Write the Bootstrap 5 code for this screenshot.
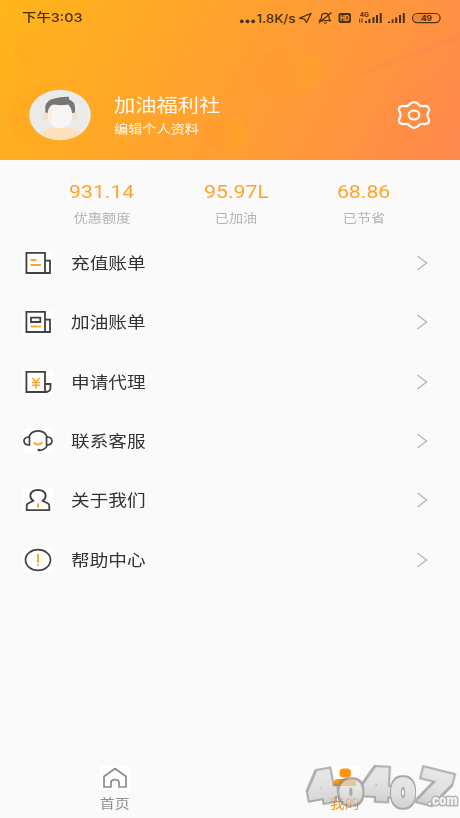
<!DOCTYPE html>
<html lang="zh-CN">
<head>
<meta charset="utf-8">
<meta name="viewport" content="width=device-width, initial-scale=1">
<title>我的</title>
<link href="https://cdn.jsdelivr.net/npm/bootstrap@5.3.0/dist/css/bootstrap.min.css" rel="stylesheet">
<style>
  body { background: #fafafa; font-family: Roboto, "Noto Sans CJK SC", sans-serif; color: #333; }
  .screen { width: 460px; height: 818px; }
  .hero { height: 160px; background: linear-gradient(116deg, #ffb51a 0%, #ffa728 32%, #ff9a38 65%, #ff8a4e 100%); }
  .hero-art { inset: 0; }
  .statusbar { height: 35px; padding: 0 19px 0 22px; color: #4b300c; }
  .clock { font: 500 12.2px/18px Inter, "Noto Sans CJK SC", sans-serif; }
  .wide { display: inline-block; white-space: nowrap; transform: scaleX(1.18); transform-origin: left center; }
  .wide-mid { transform-origin: center; }
  .profile { height: 62px; margin-top: 49px; padding: 0 28px 0 29px; }
  .names { margin-left: 23px; padding-top: 10px; color: #fffaf0; }
  .user-name { font-size: 18px; line-height: 24px; }
  .user-edit { font-size: 12px; line-height: 18px; margin-top: 3px; }
  .stats { height: 73px; padding: 19px 35px 0; display: grid; grid-template-columns: 134px 134px 122px; }
  .stat-num { font-size: 18px; line-height: 26px; color: #ffa42c; }
  .stat-label { font-size: 12px; line-height: 18px; color: #b3b3b3; margin-top: 5px; }
  .menu-row { height: 59.45px; padding: 0 32px 0 23px; }
  .menu-label { font-size: 15.8px; line-height: 24px; margin: 2px 0 0 17.5px; }
  .tile { background: #fff; }
  .tabs { height: 56px; }
  .tab-label { font-size: 12.7px; line-height: 18px; margin-top: 5px; color: #909090; }
  .tab-on { color: #ff9512; }
  .stamp { right: 0; bottom: 0; }
</style>
<script src="https://cdn.jsdelivr.net/npm/bootstrap@5.3.0/dist/js/bootstrap.bundle.min.js"></script>
</head>
<body>
<main class="screen position-relative overflow-hidden d-flex flex-column">
  <header class="hero position-relative flex-shrink-0">
    <svg class="hero-art position-absolute" width="460" height="160">
      <defs>
        <linearGradient id="blob"><stop offset="0" stop-color="#ff962f" stop-opacity=".3"/><stop offset="1" stop-color="#ffa526" stop-opacity=".5"/></linearGradient>
        <linearGradient id="blobS"><stop offset="0" stop-color="#ff9430" stop-opacity=".5"/><stop offset="1" stop-color="#ffa820" stop-opacity=".7"/></linearGradient>
        <linearGradient id="blobL"><stop offset="0" stop-color="#ff9d20" stop-opacity=".25"/><stop offset="1" stop-color="#ffa52a" stop-opacity="0"/></linearGradient>
      </defs>
      <ellipse cx="288" cy="72" rx="34" ry="25" fill="url(#blob)"/>
      <ellipse cx="226" cy="134" rx="22" ry="17" fill="url(#blobS)"/>
      <ellipse cx="40" cy="50" rx="26" ry="19" fill="url(#blobL)"/>
      <ellipse cx="61" cy="116" rx="52" ry="35" fill="url(#blobL)"/>
      <path d="M460 32L400 57L330 84L385 67L460 40z" fill="#ff8052" opacity=".3"/>
      <path d="M460 64C415 85 385 90 355 160H460z" fill="#ff8052" opacity=".1"/>
    </svg>
    <div class="statusbar position-relative d-flex align-items-center justify-content-between">
      <span class="clock wide">下午3:03</span>
      <svg width="202" height="20" viewBox="239 7 202 20" fill="#4b300c" font-family="Inter, sans-serif">
        <circle cx="241.8" cy="20.3" r="1.9"/><circle cx="247.5" cy="20.3" r="1.9"/><circle cx="253.2" cy="20.3" r="1.9"/>
        <text x="256.500" y="21.500" font-size="12" font-weight="500" textLength="39" lengthAdjust="spacingAndGlyphs">1.8K/s</text>
        <path d="M299.500 17.200L311 12.500L306.500 21.500L304.500 18.200z" fill="none" stroke="#4b300c" stroke-width="1.300" stroke-linejoin="round"/>
        <path d="M319.500 19.700H330.500L329 17.500V15.500C329 13.300 327.500 12.300 325.300 12.300S321.500 13.300 321.500 15.500V17.500zM323.800 22H327M318.800 22L331.500 11.500" fill="none" stroke="#4b300c" stroke-width="1.200"/>
        <rect x="338.500" y="12" width="12.500" height="10" rx="2"/>
        <text x="340" y="19.800" font-size="7" font-weight="800" fill="#ffa03a" textLength="9.500" lengthAdjust="spacingAndGlyphs">HD</text>
        <text x="359.800" y="15.600" font-size="6" font-weight="700" textLength="9" lengthAdjust="spacingAndGlyphs">4G</text>
        <path d="M359.700 17.500V21.500M362 17.500V21.500" stroke="#4b300c" stroke-width="1"/>
        <path d="M365 20h2v2h-2zM368.400 18h2v4h-2zM372.500 16h2v6h-2zM376 14h2v8h-2zM379.700 12h2v10h-2zM388 20.500h2v1.500h-2zM391.600 18.500h2v3.500h-2zM395.200 16.500h2v5.500h-2zM399 14h2v8h-2zM402.800 12h2v10h-2z"/>
        <rect x="412.600" y="12.500" width="27.500" height="9.200" rx="4.600" fill="none" stroke="#4b300c" stroke-width="1.200"/>
        <path d="M418 13.500H427V20.700H418A3.600 3.600 0 0 1 418 13.500z" opacity=".13"/>
        <text x="421" y="20" font-size="8" font-weight="700" textLength="11" lengthAdjust="spacingAndGlyphs">49</text>
      </svg>
    </div>
    <div class="profile position-relative d-flex align-items-start">
      <svg width="62" height="62" viewBox="0 0 62 62" class="flex-shrink-0">
        <defs><clipPath id="av"><ellipse cx="31" cy="31" rx="30" ry="24.500"/></clipPath></defs>
        <ellipse cx="31" cy="31" rx="30.800" ry="25.300" fill="#ebebe9"/>
        <g clip-path="url(#av)">
          <ellipse cx="31" cy="55" rx="23" ry="12" fill="#ffe0bd"/>
          <ellipse cx="17" cy="32" rx="3.500" ry="4" fill="#f6e1ce"/><ellipse cx="45" cy="32" rx="3.500" ry="4" fill="#f6e1ce"/>
          <path d="M19 28Q20 20 31 20T43 28V34Q41 44 31 44T19 34z" fill="#f8f6f5"/>
          <path d="M19 28Q20 22 23 21V39Q19 36 19 29z" fill="#ffeedb"/>
          <path d="M16.300 28.500V22Q18 17 22 15.500Q28 13 40 12.700V15.500Q46 17.500 46 23V28.500L43 29Q42.500 23 39 20.500Q32 22 25 20.500Q20 20.500 18.500 29z" fill="#777575"/>
        </g>
      </svg>
      <div class="names d-flex flex-column align-items-start">
        <span class="user-name wide">加油福利社</span>
        <span class="user-edit wide">编辑个人资料</span>
      </div>
      <svg class="ms-auto align-self-center" width="36" height="32" viewBox="0 0 36 32" fill="none" stroke="#fff" stroke-width="2.200" stroke-linejoin="round">
        <path d="M14.500 4.500Q18 1.700 21.500 4.500Q24 7.800 28 7Q32 6.600 33 9.500Q33.500 11.500 32 13.500Q30.800 16 32 18.500Q33.500 20.500 33 22.500Q32 25.400 28 25Q24 24.200 21.500 27.500Q18 30.300 14.500 27.500Q12 24.200 8 25Q4 25.400 3 22.500Q2.500 20.500 4 18.500Q5.200 16 4 13.500Q2.500 11.500 3 9.500Q4 6.600 8 7Q12 7.800 14.500 4.500z"/>
        <ellipse cx="18" cy="16" rx="5.300" ry="4.500"/>
      </svg>
    </div>
  </header>

  <section class="stats text-center flex-shrink-0">
    <div><div class="stat-num"><span class="wide wide-mid">931.14</span></div><div class="stat-label"><span class="wide wide-mid">优惠额度</span></div></div>
    <div><div class="stat-num"><span class="wide wide-mid">95.97L</span></div><div class="stat-label"><span class="wide wide-mid">已加油</span></div></div>
    <div><div class="stat-num"><span class="wide wide-mid">68.86</span></div><div class="stat-label"><span class="wide wide-mid">已节省</span></div></div>
  </section>

  <nav class="flex-grow-1">
    <div class="menu-row d-flex align-items-center">
      <svg class="tile" width="30" height="24" viewBox="0 0 30 24" fill="none" stroke="#414141" stroke-width="1.800"><path d="M3.400 1.900H22V22H3.400zM22 9.700H27V22H22"/><path d="M7.500 9H13.500M7.500 14H18" stroke="#ffa42c"/></svg>
      <span class="menu-label wide">充值账单</span>
      <svg class="ms-auto" width="12" height="18" fill="none" stroke="#b9b9b9" stroke-width="1.500"><path d="M1.500 2L10.500 9L1.500 16"/></svg>
    </div>
    <div class="menu-row d-flex align-items-center">
      <svg class="tile" width="30" height="24" viewBox="0 0 30 24" fill="none" stroke="#414141" stroke-width="1.800"><path d="M3.400 1.900H22V22H3.400zM22 9.700H27V22H22M8 7.700H17.300V12H8z"/><path d="M7.500 16.500H18" stroke="#ffa42c"/></svg>
      <span class="menu-label wide">加油账单</span>
      <svg class="ms-auto" width="12" height="18" fill="none" stroke="#b9b9b9" stroke-width="1.500"><path d="M1.500 2L10.500 9L1.500 16"/></svg>
    </div>
    <div class="menu-row d-flex align-items-center">
      <svg class="tile" width="30" height="24" viewBox="0 0 30 24" fill="none" stroke="#414141" stroke-width="1.800"><path d="M22 13.500V1.900H3.400V22H24Q27.500 21 27.500 18V14H22V19.500Q22 22 24 22"/><path d="M9.500 8L13 12L16.500 8M9 12.500H17M9 15.300H17M13 12V18.500" stroke="#ffa42c" stroke-width="1.600"/></svg>
      <span class="menu-label wide">申请代理</span>
      <svg class="ms-auto" width="12" height="18" fill="none" stroke="#b9b9b9" stroke-width="1.500"><path d="M1.500 2L10.500 9L1.500 16"/></svg>
    </div>
    <div class="menu-row d-flex align-items-center">
      <svg class="tile" width="30" height="24" viewBox="0 0 30 24" fill="none" stroke="#414141" stroke-width="1.700"><path d="M5.500 8.500Q8 1.800 15 1.800T24.500 8.500M6.500 8V16Q1 16 1 12T6.500 8zM23.500 8V16Q29 16 29 12T23.500 8zM24.500 16Q22 21.500 16 21.300"/><circle cx="15.800" cy="21" r="1.300" fill="#414141" stroke="none"/><path d="M10.500 13.500Q15 17.500 19.500 13.500" stroke="#ffa42c"/></svg>
      <span class="menu-label wide">联系客服</span>
      <svg class="ms-auto" width="12" height="18" fill="none" stroke="#b9b9b9" stroke-width="1.500"><path d="M1.500 2L10.500 9L1.500 16"/></svg>
    </div>
    <div class="menu-row d-flex align-items-center">
      <svg class="tile" width="30" height="24" viewBox="0 0 30 24" fill="none" stroke="#414141" stroke-width="1.800" stroke-linejoin="round"><path d="M10.500 12.800Q7.300 11 7.300 7.700Q7.800 2 15 2T22.700 7.700Q22.700 11 19.500 12.800L25 15.500Q26.300 16.300 26.300 18V22.200H3.700V18Q3.700 16.300 5 15.500z"/><path d="M15 15.500V19.500" stroke="#ffa42c" stroke-width="2.200"/></svg>
      <span class="menu-label wide">关于我们</span>
      <svg class="ms-auto" width="12" height="18" fill="none" stroke="#b9b9b9" stroke-width="1.500"><path d="M1.500 2L10.500 9L1.500 16"/></svg>
    </div>
    <div class="menu-row d-flex align-items-center">
      <svg class="tile" width="30" height="24" viewBox="0 0 30 24" fill="none" stroke="#414141" stroke-width="1.700"><ellipse cx="15" cy="12" rx="12.500" ry="10.300"/><path d="M15 6V14.800M15 16.300V18" stroke="#ffa42c" stroke-width="2"/></svg>
      <span class="menu-label wide">帮助中心</span>
      <svg class="ms-auto" width="12" height="18" fill="none" stroke="#b9b9b9" stroke-width="1.500"><path d="M1.500 2L10.500 9L1.500 16"/></svg>
    </div>
  </nav>

  <footer class="tabs row g-0 text-center flex-shrink-0">
    <div class="col-6 d-flex flex-column align-items-center pt-1">
      <svg class="tile" width="30" height="24" viewBox="0 0 30 24" fill="none" stroke="#8c8c8c" stroke-width="1.700" stroke-linejoin="round"><path d="M4 10.500L15 2.500L26 10.500V21H19V17Q19 13.700 15 13.700T11 17V21H4z"/></svg>
      <span class="tab-label wide wide-mid">首页</span>
    </div>
    <div class="col-6 d-flex flex-column align-items-center pt-1">
      <svg class="tile" width="30" height="24" viewBox="0 0 30 24" fill="#ff9512"><rect x="9.500" y="2.500" width="11.500" height="9" rx="4"/><path d="M4 20V16Q4 13 8 13H22Q26 13 26 16V20z"/></svg>
      <span class="tab-label tab-on wide wide-mid">我的</span>
    </div>
  </footer>

  <svg class="stamp position-absolute" width="164" height="66" viewBox="296 752 164 66" font-family="Inter, sans-serif" font-weight="900" text-anchor="middle" opacity=".68">
    <defs>
      <linearGradient id="steel" x1="0" y1="0" x2="0" y2="1"><stop offset="0" stop-color="#e4e4e4"/><stop offset=".5" stop-color="#d6d6d6"/><stop offset="1" stop-color="#b4b4b4"/></linearGradient>
      <filter id="rim" x="-30%" y="-30%" width="160%" height="160%">
        <feMorphology in="SourceAlpha" operator="dilate" radius="1.6" result="fat"/>
        <feFlood flood-color="#838383"/><feComposite in2="fat" operator="in"/>
        <feMerge><feMergeNode/><feMergeNode in="SourceGraphic"/></feMerge>
      </filter>
    </defs>
    <g fill="url(#steel)" stroke="url(#steel)" stroke-width="3.500" font-size="42">
      <text filter="url(#rim)" transform="translate(324 801) rotate(-10)" font-size="40">4</text>
      <text filter="url(#rim)" transform="translate(376 799) rotate(3)" font-size="41">4</text>
      <text filter="url(#rim)" transform="translate(431 803) rotate(14) scale(1.150 1)" font-size="43">7</text>
      <text filter="url(#rim)" transform="translate(351 803)" font-size="30">0</text>
      <text filter="url(#rim)" transform="translate(403 806) scale(.88 1)" font-size="37">0</text>
    </g>
    <text x="442.500" y="805" font-size="13" fill="#eee" stroke="#959595" stroke-width="3" stroke-linejoin="round" paint-order="stroke" textLength="30" lengthAdjust="spacingAndGlyphs">.com</text>
  </svg>
</main>
</body>
</html>
